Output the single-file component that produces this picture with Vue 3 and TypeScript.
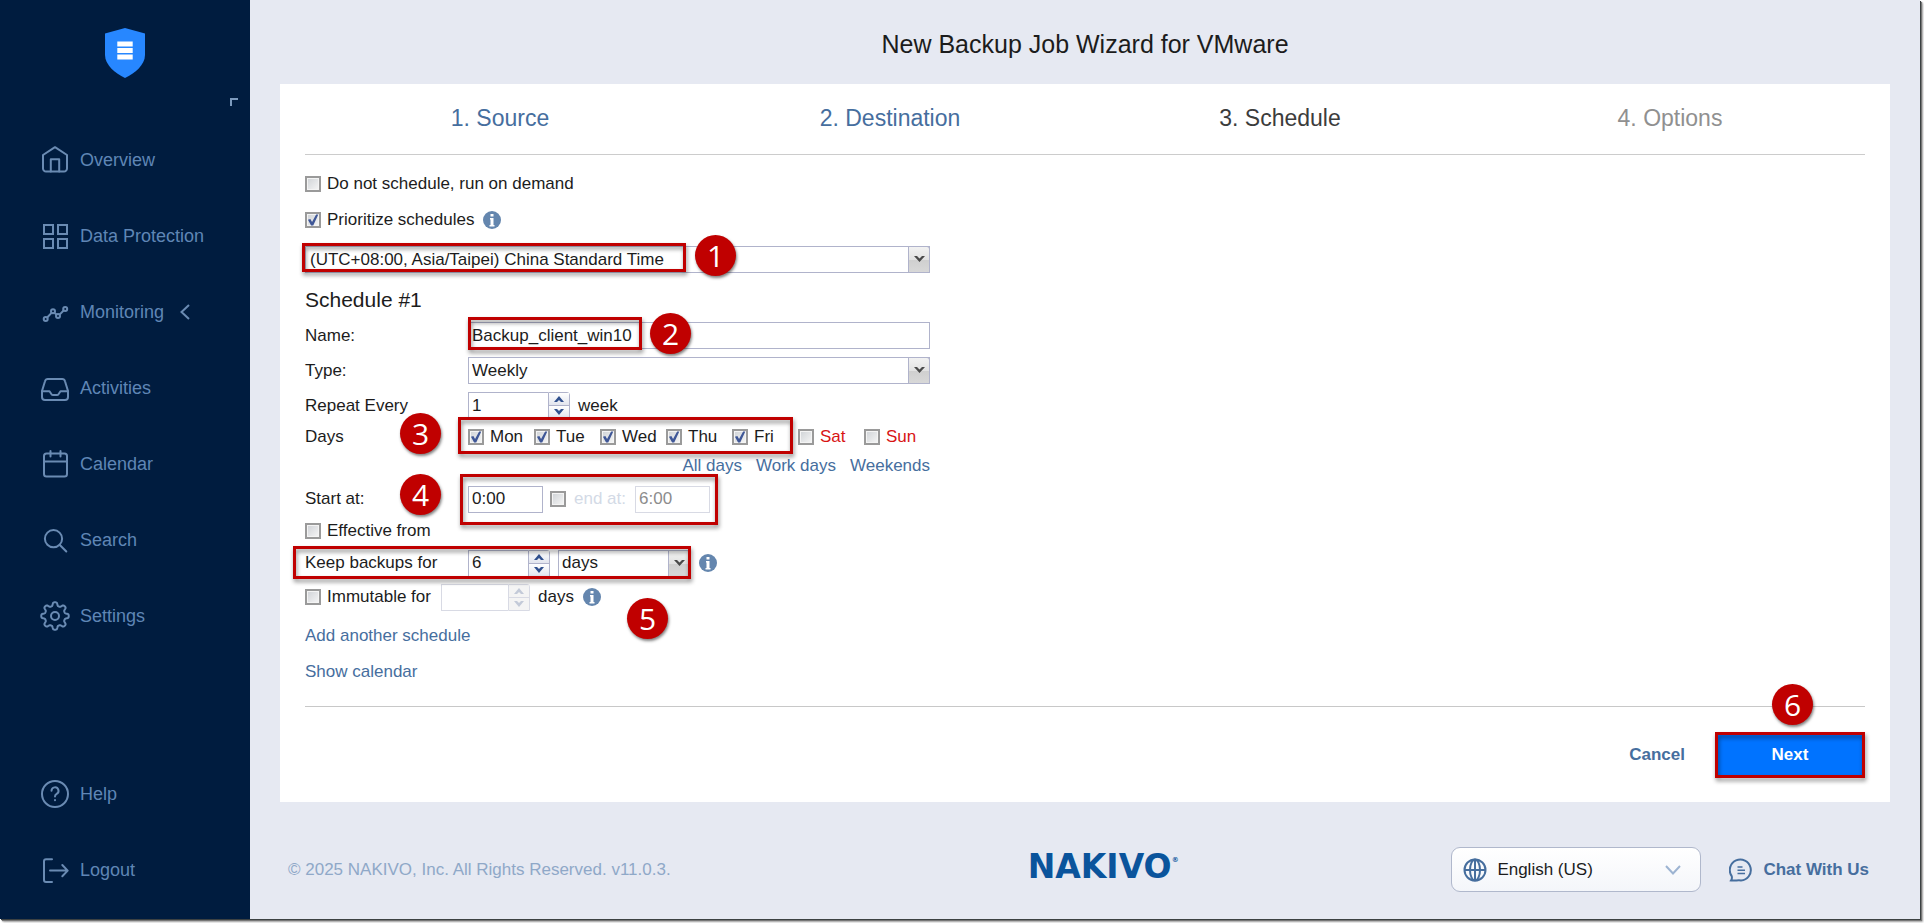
<script setup lang="ts">
import { ref } from 'vue'

interface NavItem {
  id: string
  label: string
  expandable?: boolean
}

interface Day {
  name: string
  checked: boolean
  weekend?: boolean
}

const mainNav: NavItem[] = [
  { id: 'home', label: 'Overview' },
  { id: 'grid', label: 'Data Protection' },
  { id: 'graph', label: 'Monitoring', expandable: true },
  { id: 'inbox', label: 'Activities' },
  { id: 'calendar', label: 'Calendar' },
  { id: 'search', label: 'Search' },
  { id: 'gear', label: 'Settings' },
]

const bottomNav: NavItem[] = [
  { id: 'help', label: 'Help' },
  { id: 'logout', label: 'Logout' },
]

const steps = [
  { label: '1. Source', state: 'done' },
  { label: '2. Destination', state: 'done' },
  { label: '3. Schedule', state: 'current' },
  { label: '4. Options', state: 'pending' },
]

const onDemand = ref(false)
const prioritize = ref(true)
const timezone = ref('(UTC+08:00, Asia/Taipei) China Standard Time')
const scheduleName = ref('Backup_client_win10')
const scheduleType = ref('Weekly')
const repeatEvery = ref(1)
const startAt = ref('0:00')
const useEnd = ref(false)
const endAt = ref('6:00')
const effective = ref(false)
const keepFor = ref(6)
const keepUnit = ref('days')
const immutable = ref(false)
const immutableFor = ref('')
const language = ref('English (US)')

const days = ref<Day[]>([
  { name: 'Mon', checked: true },
  { name: 'Tue', checked: true },
  { name: 'Wed', checked: true },
  { name: 'Thu', checked: true },
  { name: 'Fri', checked: true },
  { name: 'Sat', checked: false, weekend: true },
  { name: 'Sun', checked: false, weekend: true },
])

function pickDays(test: (day: Day) => boolean) {
  days.value.forEach((day) => { day.checked = test(day) })
}

// Outline of an eight-toothed cog with rounded teeth, centred in a 30 unit box.
function gearOutline(): string {
  const points: string[] = []
  for (let i = 0; i < 160; i++) {
    const angle = (i / 160) * Math.PI * 2
    const radius = 12 + 1.8 * Math.tanh(2 * Math.cos(8 * angle))
    points.push(`${(15 + radius * Math.sin(angle)).toFixed(2)},${(15 - radius * Math.cos(angle)).toFixed(2)}`)
  }
  return points.join(' ')
}
const gear = gearOutline()
</script>

<template>
  <div class="window">
    <aside class="sidebar">
      <a class="brand" href="#" aria-label="Home">
        <svg width="40" height="50" viewBox="0 0 40 50">
          <path fill="#2787ff" d="M20 0 40 5.5V27C40 37 30 45 20 50 10 45 0 37 0 27V5.5Z" />
          <path fill="#fff" d="M12.3 13.5h15.4v5H12.3zM12.3 20h15.4v5H12.3zM12.3 26.5h15.4v5H12.3z" />
        </svg>
      </a>
      <button class="collapse" type="button" aria-label="Collapse menu"></button>

      <nav class="nav">
        <template v-for="(group, g) in [mainNav, bottomNav]" :key="g">
          <div class="nav-group">
            <a v-for="item in group" :key="item.id" class="nav-item" href="#">
              <svg class="nav-icon" viewBox="0 0 30 30">
                <template v-if="item.id === 'home'">
                  <path d="M15 2.2 3 10V23.5a3 3 0 0 0 3 3H24a3 3 0 0 0 3-3V10Z" />
                  <path d="M10.8 26.5V14.3H19.2V26.5" />
                </template>
                <template v-else-if="item.id === 'grid'">
                  <path d="M4 4h9v9H4zM18 4h9v9h-9zM4 18h9v9H4zM18 18h9v9h-9z" stroke-linejoin="miter" />
                </template>
                <template v-else-if="item.id === 'graph'">
                  <circle cx="5.7" cy="22" r="2" />
                  <circle cx="13" cy="14.3" r="2" />
                  <circle cx="18" cy="19" r="2" />
                  <circle cx="25.2" cy="12" r="2" />
                  <path d="m7.2 20.5 4.3-4.6m3.1.1 1.8 1.6m3.2 0 4-4.1" />
                </template>
                <template v-else-if="item.id === 'inbox'">
                  <path d="M2 18 5 8.2A3 3 0 0 1 8 6h14a3 3 0 0 1 3 2.2L28 18v6a3 3 0 0 1-3 3H5a3 3 0 0 1-3-3z" />
                  <path d="M2 18.2h7.5l2 3a1.8 1.8 0 0 0 1.5.8h4a1.8 1.8 0 0 0 1.5-.8l2-3H28" />
                </template>
                <template v-else-if="item.id === 'calendar'">
                  <rect x="4" y="4.5" width="23" height="23" rx="2.5" />
                  <path d="M4 12.5h23M10.500 2v5.5M20.500 2v5.5" />
                </template>
                <template v-else-if="item.id === 'search'">
                  <circle cx="13.5" cy="13.7" r="8.6" />
                  <path d="m19.800 20 6.500 6.500" />
                </template>
                <template v-else-if="item.id === 'gear'">
                  <polygon :points="gear" />
                  <circle cx="15" cy="15" r="4" />
                </template>
                <template v-else-if="item.id === 'help'">
                  <circle cx="15" cy="15" r="13" />
                  <path d="M11.500 11.800a3.500 3.500 0 1 1 5.200 3.100c-1.200.7-1.700 1.300-1.700 2.600M15 21v.2" />
                </template>
                <template v-else>
                  <path d="M12 4.200H6a2 2 0 0 0-2 2V25a2 2 0 0 0 2 2h6M10 15.600h17.500M22.300 10l5.400 5.600-5.400 5.600" />
                </template>
              </svg>
              <span>{{ item.label }}</span>
              <svg v-if="item.expandable" class="nav-chevron" viewBox="0 0 10 16">
                <path d="M9 1 1.500 8 9 15" />
              </svg>
            </a>
          </div>
        </template>
      </nav>
    </aside>

    <div class="main">
      <h1 class="title">New Backup Job Wizard for VMware</h1>

      <section class="panel">
        <ol class="steps">
          <li v-for="step in steps" :key="step.label">
            <a v-if="step.state === 'done'" href="#">{{ step.label }}</a>
            <span v-else :class="step.state">{{ step.label }}</span>
          </li>
        </ol>

        <form class="form" @submit.prevent>
          <div class="row high">
            <label class="check"><input v-model="onDemand" type="checkbox">Do not schedule, run on demand</label>
          </div>
          <div class="row high">
            <label class="check"><input v-model="prioritize" type="checkbox">Prioritize schedules</label>
            <svg class="info" viewBox="0 0 18 18"><circle cx="9" cy="9" r="9" /><path d="M7.500 3h3v2.500h-3zM7 7h3.500v7h1v1.500h-5V14h1V8.500H7z" /></svg>
          </div>

          <div class="row zone">
            <div class="combo">
              <select v-model="timezone" aria-label="Time zone">
                <option>(UTC+08:00, Asia/Taipei) China Standard Time</option>
                <option>(UTC+00:00) Coordinated Universal Time</option>
              </select>
              <span class="drop"><svg viewBox="0 0 11 7"><path d="M0 0h3l2.500 2.500L8 0h3L5.500 6z" /></svg></span>
            </div>
            <span class="mark mark-zone"></span><b class="badge badge-1">1</b>
          </div>

          <h2 class="subtitle">Schedule #1</h2>

          <div class="row field">
            <label class="caption" for="name">Name:</label>
            <input id="name" v-model="scheduleName" class="text" type="text">
            <span class="mark mark-name"></span><b class="badge badge-2">2</b>
          </div>
          <div class="row field">
            <label class="caption" for="type">Type:</label>
            <div class="combo">
              <select id="type" v-model="scheduleType">
                <option>Daily</option>
                <option>Weekly</option>
                <option>Monthly</option>
              </select>
              <span class="drop"><svg viewBox="0 0 11 7"><path d="M0 0h3l2.500 2.500L8 0h3L5.500 6z" /></svg></span>
            </div>
          </div>
          <div class="row field">
            <label class="caption" for="repeat">Repeat Every</label>
            <div class="spinner">
              <input id="repeat" v-model="repeatEvery" class="text wide" type="text">
              <span class="arrows">
                <button type="button" aria-label="More weeks" @click="repeatEvery++"><svg viewBox="0 0 10 6"><path d="M0 6h3l2-2 2 2h3L5 0z" /></svg></button>
                <button type="button" aria-label="Fewer weeks" @click="repeatEvery--"><svg viewBox="0 0 10 6"><path d="M0 0h3l2 2 2-2h3L5 6z" /></svg></button>
              </span>
            </div>
            <span class="unit">week</span>
          </div>

          <div class="row compact">
            <span class="caption">Days</span>
            <div class="days">
              <label v-for="day in days" :key="day.name" class="check" :class="{ weekend: day.weekend }">
                <input v-model="day.checked" type="checkbox">{{ day.name }}
              </label>
            </div>
            <span class="mark mark-days"></span><b class="badge badge-3">3</b>
          </div>
          <div class="row presets">
            <a href="#" @click.prevent="pickDays(() => true)">All days</a>
            <a href="#" @click.prevent="pickDays((d) => !d.weekend)">Work days</a>
            <a href="#" @click.prevent="pickDays((d) => !!d.weekend)">Weekends</a>
          </div>

          <div class="row compact">
            <label class="caption" for="start">Start at:</label>
            <input id="start" v-model="startAt" class="text time" type="text">
            <label class="check end"><input v-model="useEnd" type="checkbox">end at:</label>
            <input v-model="endAt" class="text time" type="text" aria-label="End time" :disabled="!useEnd">
            <span class="mark mark-start"></span><b class="badge badge-4">4</b>
          </div>
          <div class="row compact">
            <label class="check"><input v-model="effective" type="checkbox">Effective from</label>
          </div>
          <div class="row compact keep">
            <label class="caption" for="keep">Keep backups for</label>
            <div class="spinner">
              <input id="keep" v-model="keepFor" class="text narrow" type="text">
              <span class="arrows">
                <button type="button" aria-label="Keep longer" @click="keepFor++"><svg viewBox="0 0 10 6"><path d="M0 6h3l2-2 2 2h3L5 0z" /></svg></button>
                <button type="button" aria-label="Keep shorter" @click="keepFor--"><svg viewBox="0 0 10 6"><path d="M0 0h3l2 2 2-2h3L5 6z" /></svg></button>
              </span>
            </div>
            <div class="combo small">
              <select v-model="keepUnit" aria-label="Retention unit">
                <option>days</option>
                <option>weeks</option>
              </select>
              <span class="drop"><svg viewBox="0 0 11 7"><path d="M0 0h3l2.500 2.500L8 0h3L5.500 6z" /></svg></span>
            </div>
            <svg class="info" viewBox="0 0 18 18"><circle cx="9" cy="9" r="9" /><path d="M7.500 3h3v2.500h-3zM7 7h3.500v7h1v1.500h-5V14h1V8.500H7z" /></svg>
            <span class="mark mark-keep"></span><b class="badge badge-5">5</b>
          </div>
          <div class="row compact">
            <label class="check immutable"><input v-model="immutable" type="checkbox">Immutable for</label>
            <div class="spinner" :class="{ off: !immutable }">
              <input v-model="immutableFor" class="text middle" type="text" aria-label="Immutable days" :disabled="!immutable">
              <span class="arrows">
                <button type="button" aria-label="More days" :disabled="!immutable"><svg viewBox="0 0 10 6"><path d="M0 6h3l2-2 2 2h3L5 0z" /></svg></button>
                <button type="button" aria-label="Fewer days" :disabled="!immutable"><svg viewBox="0 0 10 6"><path d="M0 0h3l2 2 2-2h3L5 6z" /></svg></button>
              </span>
            </div>
            <span class="unit">days</span>
            <svg class="info" viewBox="0 0 18 18"><circle cx="9" cy="9" r="9" /><path d="M7.500 3h3v2.500h-3zM7 7h3.500v7h1v1.500h-5V14h1V8.500H7z" /></svg>
          </div>

          <div class="links">
            <div class="row high"><a href="#">Add another schedule</a></div>
            <div class="row high"><a href="#">Show calendar</a></div>
          </div>

          <div class="actions">
            <button class="cancel" type="button">Cancel</button>
            <div class="next-wrap">
              <button class="next" type="submit">Next</button>
              <span class="mark mark-next"></span><b class="badge badge-6">6</b>
            </div>
          </div>
        </form>
      </section>

      <footer class="footer">
        <span class="copyright">© 2025 NAKIVO, Inc. All Rights Reserved. v11.0.3.</span>
        <span class="logo">NAKIVO<sup>®</sup></span>
        <div class="tools">
          <div class="language">
            <svg class="globe" viewBox="0 0 24 24"><circle cx="12" cy="12" r="10.5" /><ellipse cx="12" cy="12" rx="5" ry="10.5" /><path d="M12 1.500v21M1.500 12h21" /></svg>
            <select v-model="language" aria-label="Language">
              <option>English (US)</option>
              <option>Deutsch</option>
            </select>
            <svg class="lang-arrow" viewBox="0 0 16 10"><path d="m1 1 7 7.500L15 1" /></svg>
          </div>
          <a class="chat" href="#">
            <svg viewBox="0 0 24 24"><path d="M2 22.500c1-1.500 1.200-3 .6-4.600A10.500 10.500 0 1 1 12 22.500c-3-.6-6 .5-10 0Z" /><path d="M8.500 9h5M8.500 12.200h7.500M8.500 15.400h7.500" stroke-width="1.5" /></svg>
            Chat With Us
          </a>
        </div>
      </footer>
    </div>
  </div>
</template>

<style>
body {
  margin: 0;
  background: #fff;
}
</style>

<style scoped>
.window {
  display: flex;
  min-height: calc(100vh - 4px);
  margin: 0 4px 4px 0;
  background: #e6e9f2;
  box-shadow: 1px 1px 0 #3c4142, 2px 2px 1px #777, 3px 3px 2px #aaa;
  color: #1c1c1c;
  font: 17px/20px "Liberation Sans", Arial, sans-serif;
}

* {
  box-sizing: border-box;
}

a {
  color: #466e9e;
  text-decoration: none;
}

button,
input,
select {
  margin: 0;
  color: inherit;
  font: inherit;
}

/* Sidebar */
.sidebar {
  position: relative;
  display: flex;
  flex: none;
  flex-direction: column;
  width: 250px;
  background: #001c3f;
}

.brand {
  display: flex;
  justify-content: center;
  height: 122px;
  padding-top: 28px;
}

.collapse {
  position: absolute;
  top: 98px;
  right: 12px;
  width: 8px;
  height: 8px;
  padding: 0;
  border: solid #7c9abd;
  border-width: 2px 0 0 2px;
  background: none;
}

.nav {
  display: flex;
  flex: 1;
  flex-direction: column;
  justify-content: space-between;
  padding-bottom: 11px;
}

.nav-item {
  display: flex;
  align-items: center;
  gap: 10px;
  height: 76px;
  padding-left: 40px;
  color: #5f86b5;
  font-size: 18px;
}

.nav-icon {
  width: 30px;
  height: 30px;
  fill: none;
  stroke: #6a8bb3;
  stroke-width: 2;
  stroke-linecap: round;
  stroke-linejoin: round;
}

.nav-chevron {
  width: 10px;
  height: 16px;
  margin-left: 6px;
  fill: none;
  stroke: #6a8bb3;
  stroke-width: 2;
}

/* Main column */
.main {
  flex: 1;
  min-width: 0;
}

.title {
  height: 84px;
  margin: 0;
  color: #1c1c1c;
  font-size: 25px;
  font-weight: normal;
  line-height: 88px;
  text-align: center;
}

.panel {
  margin: 0 30px;
  padding: 0 25px;
  background: #fff;
}

.steps {
  display: grid;
  grid-template-columns: repeat(4, 1fr);
  margin: 0;
  padding: 0 0 2px;
  border-bottom: 1px solid #ccc;
  font-size: 23px;
  line-height: 68px;
  list-style: none;
  text-align: center;
}

.current {
  color: #3c3c3c;
}

.pending {
  color: #909090;
}

/* Form rows */
.form {
  padding-top: 11px;
}

.row {
  position: relative;
  display: flex;
  align-items: center;
  max-width: 625px;
}

.high {
  height: 36px;
}

.zone {
  margin-top: 8px;
}

.field {
  margin-bottom: 8px;
}

.field + .compact {
  margin-top: -6px;
}

.compact {
  height: 32px;
}

.keep {
  margin-bottom: 2px;
}

.links {
  padding-top: 5px;
}

.subtitle {
  margin: 8px 0 3px;
  color: #1c1c1c;
  font-size: 21px;
  font-weight: normal;
  line-height: 38px;
}

.caption {
  flex: none;
  width: 163px;
}

.unit {
  margin-left: 8px;
}

.check {
  display: flex;
  align-items: center;
  gap: 6px;
}

.check input {
  display: block;
  flex: none;
  width: 16px;
  height: 16px;
  border: 2px solid #9a9a9a;
  appearance: none;
  background: linear-gradient(135deg, #cfd2d6, #f6f6f6);
  box-shadow: inset 0 0 0 1px #f4f4f4;
}

.check input:checked::after {
  display: block;
  width: 12px;
  height: 12px;
  background: #3f5797;
  clip-path: polygon(8% 48%, 28% 42%, 42% 66%, 76% 4%, 94% 4%, 52% 96%, 34% 96%);
  content: "";
}

.info {
  width: 18px;
  height: 18px;
  margin-left: 9px;
  fill: #6486ae;
}

.info path {
  fill: #fff;
}

.text,
.combo select {
  height: 27px;
  padding: 0 3px;
  border: 1px solid #b0b3cb;
  border-radius: 0;
  outline: none;
  background: #fff;
}

.text {
  flex: 1;
  min-width: 0;
}

.text:disabled {
  border-color: #d8dae4;
  color: #8c8c8c;
}

.text.wide,
.text.narrow,
.text.middle,
.text.time {
  flex: none;
}

.text.wide {
  width: 80px;
}

.text.narrow {
  width: 60px;
}

.text.middle {
  width: 67px;
}

.text.time {
  width: 75px;
}

.combo {
  position: relative;
  flex: 1;
  height: 27px;
}

.combo select {
  display: block;
  width: 100%;
  padding-right: 24px;
  appearance: none;
}

.combo.small {
  flex: none;
  width: 132px;
  margin-left: 8px;
}

.zone select {
  padding-left: 4px;
}

.drop {
  position: absolute;
  top: 0;
  right: 0;
  display: flex;
  align-items: center;
  justify-content: center;
  width: 22px;
  height: 27px;
  border: 1px solid #b0b3cb;
  border-top-right-radius: 3px;
  background: linear-gradient(#f2f2f2, #e2e2e2 50%, #cfcfcf 51%, #d8d8d8);
  pointer-events: none;
}

.drop svg {
  width: 11px;
  height: 7px;
  fill: #4a4a4a;
}

.spinner {
  display: flex;
}

.spinner .text {
  border-right: 0;
}

.arrows {
  display: flex;
  flex-direction: column;
  width: 22px;
  border: 1px solid #b0b3cb;
  border-top-right-radius: 3px;
}

.arrows button {
  display: flex;
  flex: 1;
  align-items: center;
  justify-content: center;
  min-height: 0;
  padding: 0;
  border: 0;
  background: linear-gradient(#fff, #e2e5ee);
}

.arrows button + button {
  border-top: 1px solid #b0b3cb;
}

.arrows svg {
  width: 10px;
  height: 6px;
  fill: #30508e;
}

.off .arrows,
.off .arrows button + button {
  border-color: #d8dae4;
}

.off .arrows button {
  background: #f4f4f4;
}

.off .arrows svg {
  fill: #c3cad8;
}

.days {
  display: grid;
  flex: 1;
  grid-template-columns: repeat(7, 1fr);
}

.weekend {
  color: #d81414;
}

.presets {
  gap: 14px;
  justify-content: flex-end;
  height: 26px;
  margin-bottom: 4px;
}

.end {
  gap: 8px;
  margin: 0 9px 0 7px;
  color: #d3dae6;
}

.immutable {
  width: 136px;
}

/* Buttons under the form */
.actions {
  display: flex;
  align-items: center;
  justify-content: flex-end;
  gap: 30px;
  margin-top: 16px;
  padding: 25px 0 24px;
  border-top: 1px solid #c8c8c8;
}

.cancel {
  padding: 0;
  border: 0;
  background: none;
  color: #466e9e;
  font-weight: bold;
}

.next-wrap {
  position: relative;
}

.next {
  display: block;
  width: 150px;
  height: 46px;
  border: 0;
  background: #0073ff;
  color: #fff;
  font-weight: bold;
}

/* Numbered callouts laid over the form */
.mark,
.badge {
  position: absolute;
  z-index: 1;
  pointer-events: none;
}

.mark {
  border: 3px solid #c00000;
  filter: drop-shadow(1px 3px 2px rgba(0, 0, 0, 0.45));
}

.badge {
  z-index: 2;
  width: 41px;
  height: 41px;
  border-radius: 50%;
  background: #c00000;
  box-shadow: 1px 2px 3px rgba(0, 0, 0, 0.5);
  color: #fff;
  font: 30px/41px "Open Sans", "Noto Sans", sans-serif;
  text-align: center;
}

.mark-zone {
  top: -3px;
  left: -3px;
  width: 384px;
  height: 29px;
}

.badge-1 {
  top: -11px;
  left: 390px;
}

.mark-name {
  top: -5px;
  left: 163px;
  width: 174px;
  height: 33px;
}

.badge-2 {
  top: -9px;
  left: 345px;
}

.mark-days {
  top: -4px;
  left: 153px;
  width: 335px;
  height: 37px;
}

.badge-3 {
  top: -8px;
  left: 95px;
}

.mark-start {
  top: -9px;
  left: 155px;
  width: 258px;
  height: 51px;
}

.badge-4 {
  top: -9px;
  left: 95px;
}

.mark-keep {
  top: -1px;
  left: -12px;
  width: 398px;
  height: 33px;
}

.badge-5 {
  top: 51px;
  left: 322px;
}

.mark-next {
  inset: 0;
}

.badge-6 {
  top: -48px;
  left: 57px;
}

/* Page footer */
.footer {
  display: grid;
  grid-template-columns: 15fr 3fr 14fr;
  align-items: center;
  height: 117px;
  padding: 18px 51px 0 38px;
}

.copyright {
  color: #8fa8c8;
}

.logo {
  padding-bottom: 6px;
  color: #0a549c;
  font: bold 33px/36px "DejaVu Sans", sans-serif;
  white-space: nowrap;
}

.logo sup {
  font-size: 7px;
  line-height: 8px;
  vertical-align: 16px;
}

.tools {
  display: flex;
  align-items: center;
  justify-content: flex-end;
  gap: 28px;
}

.language {
  position: relative;
  width: 250px;
}

.language select {
  display: block;
  width: 100%;
  height: 45px;
  padding: 0 40px 0 45px;
  border: 1px solid #b0b8cc;
  border-radius: 9px;
  appearance: none;
  background: linear-gradient(#fff, #f4f6fa);
}

.globe,
.lang-arrow,
.chat svg {
  fill: none;
  stroke: #466e9e;
  stroke-width: 2;
}

.globe {
  position: absolute;
  top: 11px;
  left: 12px;
  width: 24px;
  height: 24px;
}

.lang-arrow {
  position: absolute;
  top: 18px;
  right: 20px;
  width: 16px;
  height: 10px;
  stroke: #9db4d2;
}

.chat {
  display: flex;
  align-items: center;
  gap: 10px;
  font-weight: bold;
  white-space: nowrap;
}

.chat svg {
  width: 24px;
  height: 24px;
}
</style>
